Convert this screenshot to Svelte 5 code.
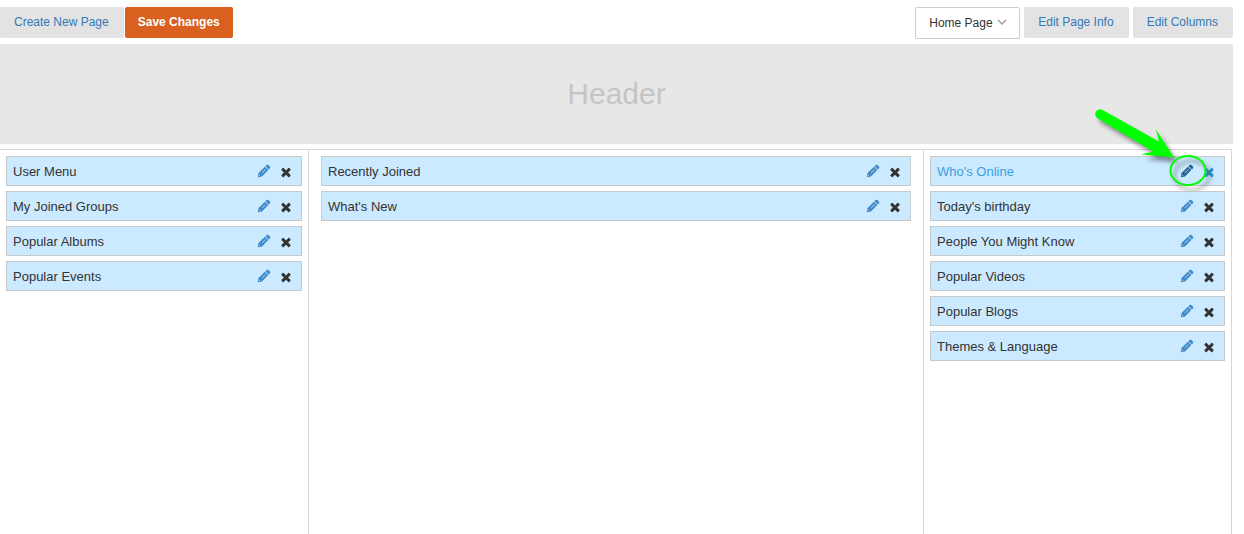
<script>
    const columns = [
        {
            name: "left",
            blocks: ["User Menu", "My Joined Groups", "Popular Albums", "Popular Events"],
        },
        {
            name: "middle",
            blocks: ["Recently Joined", "What's New"],
        },
        {
            name: "right",
            blocks: [
                "Who's Online",
                "Today's birthday",
                "People You Might Know",
                "Popular Videos",
                "Popular Blogs",
                "Themes & Language",
            ],
        },
    ];
    let active = $state("Who's Online");
    let page = $state("Home Page");
</script>

<div class="page">
    <nav class="toolbar">
        <div class="actions">
            <button class="btn">Create New Page</button>
            <button class="btn btn-save">Save Changes</button>
        </div>
        <div class="picker">
            <select bind:value={page} aria-label="Page">
                <option>Home Page</option>
            </select>
            <svg class="chevron" viewBox="0 0 10 10" aria-hidden="true">
                <path d="M1 3 L5 7 L9 3" />
            </svg>
        </div>
        <button class="btn">Edit Page Info</button>
        <button class="btn">Edit Columns</button>
    </nav>

    <header>Header</header>

    <main>
        {#each columns as column}
            <section class="column {column.name}">
                {#each column.blocks as block}
                    <div class="block" class:active={block === active}>
                        <span class="title">{block}</span>
                        <button class="icon edit" aria-label="Edit {block}" onclick={() => (active = block)}>
                            <svg viewBox="0 0 14 14">
                                <path
                                    fill-rule="evenodd"
                                    d="M.8 13.2 L1.5 9 L7.9 2.7 L11.3 6.1 L5 12.5 Z M2.2 10.8 L2 12 L3.2 11.8 Z M4.6 8.9 L8.2 5.3 L8.6 5.7 L5 9.3 Z"
                                />
                                <path d="M8.4 2.2 L9.5 1.1 Q10.5 .3 11.5 1.1 L12.9 2.5 Q13.7 3.5 12.9 4.5 L11.8 5.6 Z" />
                            </svg>
                        </button>
                        <button class="icon remove" aria-label="Remove {block}">
                            <svg viewBox="0 0 1792 1792">
                                <path
                                    d="M1490 1322q0 40-28 68l-136 136q-28 28-68 28t-68-28l-294-294-294 294q-28 28-68 28t-68-28l-136-136q-28-28-28-68t28-68l294-294-294-294q-28-28-28-68t28-68l136-136q28-28 68-28t68 28l294 294 294-294q28-28 68-28t68 28l136 136q28 28 28 68t-28 68l-294 294 294 294q28 28 28 68z"
                                />
                            </svg>
                        </button>
                        {#if block === active}
                            <!-- arrow and ring around the edit icon -->
                            <svg class="pointer" viewBox="0 0 144 100" aria-hidden="true">
                                <path
                                    class="arrow"
                                    d="M22.5 10 L79 41.5 L75.7 29 L94 57.5 L61 54.5 L73 51.5 L17.5 18.2 A4.7 4.7 0 0 1 22.5 10 Z"
                                />
                                <ellipse cx="108" cy="70.5" rx="17.5" ry="14.5" />
                            </svg>
                        {/if}
                    </div>
                {/each}
            </section>
        {/each}
    </main>
</div>

<style>
    :global(body) {
        margin: 0;
        background: #fff;
    }
    .page {
        display: flex;
        flex-direction: column;
        box-sizing: border-box;
        min-height: 100vh;
        padding: 7px 11px 0 0;
        font-family: "Liberation Sans", Arial, sans-serif;
        font-size: 13px;
        color: #333;
    }
    .toolbar {
        display: flex;
        align-items: flex-start;
        gap: 4px;
        height: 37px;
    }
    .actions {
        display: flex;
        gap: 1px;
    }
    button,
    select {
        font: inherit;
        cursor: pointer;
    }
    .btn {
        height: 31px;
        padding: 0 15px 2px 14px;
        border: 0;
        border-radius: 2px;
        background: #e3e3e3;
        color: #337ab7;
        font-size: 12px;
        white-space: nowrap;
    }
    .btn-save {
        padding: 0 13px 2px;
        background: #d9601f;
        color: #fff;
        font-weight: bold;
    }
    .picker {
        position: relative;
        margin-left: auto;
    }
    select {
        appearance: none;
        height: 32px;
        padding: 0 26px 0 13px;
        border: 1px solid #ccc;
        border-radius: 2px;
        background: #fff;
        color: #333;
        font-size: 12px;
    }
    .chevron {
        position: absolute;
        top: 10px;
        right: 13px;
        width: 10px;
        height: 10px;
        fill: none;
        stroke: #999;
        stroke-width: 1.3;
        pointer-events: none;
    }
    header {
        height: 100px;
        background: #e7e7e7;
        color: #c5c5c5;
        font-size: 30px;
        line-height: 100px;
        text-align: center;
    }
    main {
        display: grid;
        grid-template-columns: 1fr 2fr 1fr;
        flex: 1;
        margin: 5px 1px 0 0;
        border-top: 1px solid #d6d5de;
    }
    .column {
        display: flex;
        flex-direction: column;
        gap: 5px;
        padding: 6px;
    }
    .middle {
        padding: 6px 12px;
        border: solid #d6d5de;
        border-width: 0 1px;
    }
    .right {
        border-right: 1px solid #d6d5de;
    }
    .block {
        position: relative;
        display: flex;
        align-items: center;
        box-sizing: border-box;
        height: 30px;
        padding: 0 8px 0 6px;
        border: 1px solid #c6c8ca;
        background: #cceaff;
    }
    .title {
        flex: 1;
    }
    .icon {
        display: flex;
        margin-left: 8px;
        padding: 0;
        border: 0;
        background: none;
    }
    .icon svg {
        width: 14px;
        height: 14px;
    }
    .edit {
        fill: #428bca;
    }
    .remove {
        padding-top: 2px;
        fill: #333;
    }
    .active .title {
        color: #3d9fe0;
    }
    .active .edit {
        fill: #2a6496;
    }
    .active .remove {
        fill: #2f96d0;
    }
    .pointer {
        position: absolute;
        right: 0;
        bottom: -15px;
        width: 144px;
        height: 100px;
        overflow: visible;
        pointer-events: none;
        filter: drop-shadow(4px 5px 2px rgba(0, 0, 0, 0.4));
    }
    .arrow {
        fill: #0f0;
    }
    ellipse {
        fill: none;
        stroke: #0f0;
        stroke-width: 2;
    }
</style>
